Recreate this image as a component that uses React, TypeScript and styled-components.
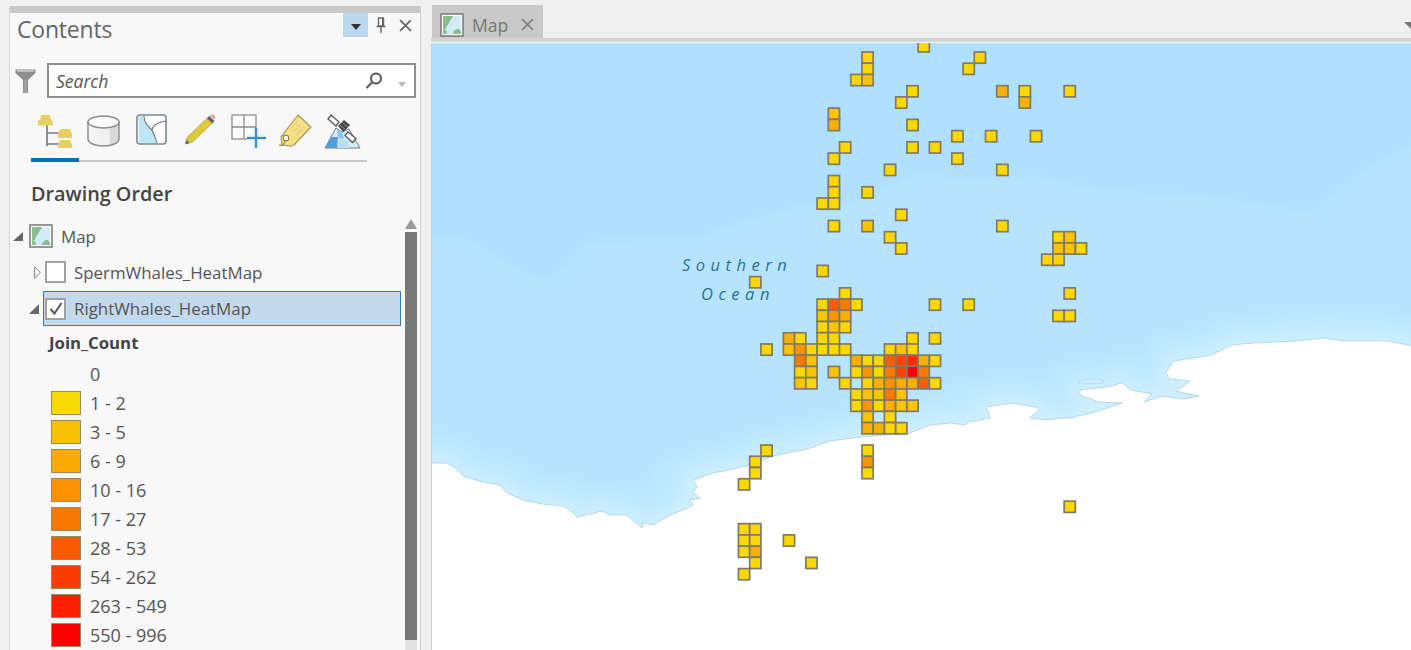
import React from 'react';
import styled, { createGlobalStyle } from 'styled-components';

const Global = createGlobalStyle`
  html, body { margin: 0; padding: 0; height: 650px; overflow: hidden; background: #f0f0f0; }
  #root { height: 650px; }
  * { box-sizing: border-box; }
`;

const Page = styled.div`
  display: flex;
  width: 1411px;
  height: 650px;
  overflow: hidden;
  font-family: "Open Sans", "Noto Sans", sans-serif;
  color: #555;
`;
const Panel = styled.aside`
  width: 412px;
  margin: 6px 0 0 9px;
  flex: none;
  display: flex;
  flex-direction: column;
  background: #f8f8f8;
  border-left: 1px solid #d8d8d8;
  border-right: 1px solid #d0d0d0;
  height: 644px;
`;
const TopBar = styled.div`
  height: 7px;
  background: #c9c9c9;
`;
const Header = styled.header`
  height: 32px;
  display: flex;
  align-items: flex-start;
  justify-content: space-between;
  padding: 0 2px 0 7px;
`;
const Title = styled.h1`
  margin: 0;
  font-size: 23px;
  line-height: 32px;
  font-weight: 400;
  color: #666;
  letter-spacing: -0.2px;
`;
const HeaderButtons = styled.div`
  display: flex;
  align-items: flex-start;
`;
const HeaderButton = styled.div<{ $active?: boolean }>`
  width: 25px;
  height: 24px;
  display: flex;
  align-items: center;
  justify-content: center;
  background: ${p => (p.$active ? '#bcd7ee' : 'transparent')};
`;
const SearchRow = styled.div`
  display: flex;
  align-items: center;
  margin-top: 18px;
  height: 35px;
  padding-left: 5px;
  gap: 11px;
`;
const SearchBox = styled.div`
  width: 369px;
  height: 35px;
  background: #fff;
  border: 2px solid #8e8e8e;
  display: flex;
  align-items: center;
  padding: 0 8px 0 7px;
`;
const SearchText = styled.span`
  flex: 1;
  font-size: 17.5px;
  font-style: italic;
  color: #555;
`;
const Tabs = styled.nav`
  margin: 16px 0 0 21px;
  width: 336px;
  height: 48px;
  border-bottom: 2px solid #c8c8c8;
  display: flex;
  align-items: flex-start;
  position: relative;
  padding-left: 7px;
`;
const ActiveMark = styled.div`
  position: absolute;
  left: 0;
  bottom: -2px;
  width: 48px;
  height: 4px;
  background: #0072bc;
`;
const TabIcon = styled.div<{ $w: number; $gap: number }>`
  width: ${p => p.$w}px;
  margin-right: ${p => p.$gap}px;
  height: 36px;
  flex: none;
`;
const Heading = styled.h2`
  margin: 18px 0 0 21px;
  height: 28px;
  font-size: 19.8px;
  line-height: 28px;
  font-weight: 600;
  color: #444;
`;
const TreeArea = styled.div`
  margin-top: 10px;
  flex: 1;
  display: flex;
  min-height: 0;
`;
const Tree = styled.div`
  flex: 1;
  min-width: 0;
`;
const Row = styled.div<{ $indent: number; $selected?: boolean }>`
  height: ${p => (p.$selected ? 35 : 36)}px;
  margin: ${p => (p.$selected ? '1px 0 0 33px' : '0')};
  width: ${p => (p.$selected ? '358px' : 'auto')};
  padding-left: ${p => p.$indent}px;
  display: flex;
  align-items: center;
  position: relative;
  background: ${p => (p.$selected ? '#c3daee' : 'transparent')};
  border: ${p => (p.$selected ? '1px solid #2a7fb8' : '0')};
`;
const Toggle = styled.span<{ $w: number }>`
  width: ${p => p.$w}px;
  flex: none;
  display: flex;
  align-items: center;
`;
const OuterToggle = styled.span`
  position: absolute;
  left: -15px;
  top: 12px;
  display: flex;
`;
const Check = styled.span`
  width: 21px;
  height: 22px;
  flex: none;
  border: 2px solid #a0a0a0;
  background: #fff;
  display: flex;
  align-items: center;
  justify-content: center;
  margin-right: 8px;
`;
const Label = styled.span`
  font-size: 16.9px;
  color: #555;
  white-space: nowrap;
`;
const MapLabelText = styled(Label)`
  margin-left: 8px;
`;
const GroupTitle = styled.div`
  height: 33px;
  padding-left: 39px;
  font-size: 16.8px;
  line-height: 33px;
  font-weight: 700;
  color: #444;
`;
const LegendRow = styled.div`
  height: 29px;
  padding-left: 41px;
  display: flex;
  align-items: center;
  gap: 9px;
`;
const LegendLabel = styled.span`
  font-size: 18px;
  color: #555;
  white-space: nowrap;
`;
const Swatch = styled.span<{ $color?: string }>`
  width: 30px;
  height: 24px;
  flex: none;
  background: ${p => p.$color ?? 'transparent'};
  border: ${p => (p.$color ? '1px solid #a08a60' : '0')};
`;
const ScrollBar = styled.div`
  width: 12px;
  margin-right: 3px;
  display: flex;
  flex-direction: column;
  background: transparent;
`;
const ScrollArrow = styled.div`
  height: 14px;
  display: flex;
  justify-content: center;
  align-items: flex-start;
  padding-top: 1px;
`;
const ScrollThumb = styled.div`
  height: 408px;
  background: #787878;
`;
const ScrollTrack = styled.div`
  flex: 1;
  background: #e2e2e2;
`;
const Main = styled.main`
  flex: 1;
  min-width: 0;
  margin-left: 10px;
  display: flex;
  flex-direction: column;
`;
const TabStrip = styled.div`
  height: 38px;
  padding-top: 5px;
  padding-left: 1px;
  display: flex;
  justify-content: space-between;
  align-items: flex-start;
`;
const MapTab = styled.div`
  width: 111px;
  height: 33px;
  background: #c9c9c9;
  display: flex;
  align-items: center;
  padding: 6px 0 0 8px;
`;
const MapTabLabel = styled.span`
  margin-left: 8px;
  font-size: 17.5px;
  color: #777;
  width: 49px;
`;
const OverflowArrow = styled.div`
  margin-top: 17px;
  width: 7px;
  height: 7px;
`;
const Rule = styled.div`
  height: 5px;
  background: #d3d3d3;
  border-bottom: 1px solid #fff;
`;
const MapFrame = styled.div`
  flex: 1;
  min-height: 0;
  border-left: 1px solid #d0d0d0;
`;
const MapSvg = styled.svg`
  display: block;
  width: 979px;
  height: 607px;
`;
const MapLabel = styled.text`
  font-family: "Open Sans", "Noto Sans", sans-serif;
  font-style: italic;
  font-size: 16.5px;
  letter-spacing: 5.5px;
  fill: #2c6f90;
`;

const TreeIcon = () => (
  <svg width="36" height="36" viewBox="0 0 36 36">
    <path d="M9 10v22M9 19h12M9 30h12" stroke="#777" strokeWidth="1.6" fill="none" />
    <path d="M3 1h9l1 6H2z" fill="#e8d060" />
    <path d="M0 6.5h15v5H0z" fill="#e8d060" />
    <path d="M22 15h10l2 5H20zM20 20h14v4H20z" fill="#e8d060" />
    <path d="M22 26h10l2 5H20zM20 31h14v3H20z" fill="#e8d060" />
  </svg>
);
const DbIcon = () => (
  <svg width="33" height="34" viewBox="0 0 33 34">
    <defs>
      <linearGradient id="db" x1="0" x2="1" y1="0" y2="0">
        <stop offset="0" stopColor="#f6f6f6" />
        <stop offset="0.7" stopColor="#eeeeee" />
        <stop offset="0.72" stopColor="#d9d9d9" />
        <stop offset="1" stopColor="#d9d9d9" />
      </linearGradient>
    </defs>
    <path d="M1 8v17c0 4 7 7 15.500 7S32 29 32 25V8z" fill="url(#db)" stroke="#8c8c8c" strokeWidth="1.4" />
    <ellipse cx="16.500" cy="8" rx="15.500" ry="6" fill="#fafafa" stroke="#8c8c8c" strokeWidth="1.400" />
  </svg>
);
const LayoutIcon = () => (
  <svg width="31" height="32" viewBox="0 0 31 32">
    <rect x="1" y="1" width="29" height="29" rx="3" fill="#fff" stroke="#7a878d" strokeWidth="1.600" />
    <path d="M3 2h5c0 6 3 9 7 13 3 3 4 9 6 14H4a1 1 0 0 1-1-1z" fill="#bde6f6" />
    <path d="M8 2c0 6 3 9 7 13 3 3 4 9 6 14M16 16c1-6 7-8 14-9" stroke="#6b787e" strokeWidth="1.100" fill="none" />
  </svg>
);
const PencilIcon = () => (
  <svg width="31" height="31" viewBox="0 0 31 31">
    <path d="M0.500 30l2-7L24 2.500l5 5L7.500 28z" fill="#e0c93c" stroke="#a89a3a" strokeWidth="0.700" />
    <path d="M0.500 30l1-4 3 3z" fill="#555" />
    <path d="M22 4.500l5 5 2.500-2.500-5-5z" fill="#666" />
    <path d="M25 1.500l3-1.200 2.500 2.500-1.200 3z" fill="#e8a0a0" />
  </svg>
);
const AddGridIcon = () => (
  <svg width="36" height="35" viewBox="0 0 36 35">
    <rect x="1" y="1" width="24" height="24" fill="#fbfbfb" stroke="#8c8c8c" strokeWidth="1.300" />
    <path d="M13 1v24M1 13h24" stroke="#8c8c8c" strokeWidth="1.300" />
    <path d="M25 14v20M16 24h19" stroke="#cfe6f3" strokeWidth="5" />
    <path d="M25 14v20M16 24h19" stroke="#3d88b4" strokeWidth="1.900" />
  </svg>
);
const TagIcon = () => (
  <svg width="35" height="34" viewBox="0 0 35 34">
    <path d="M21 1l13 12-17 18-3 1-9-1-1-8z" fill="#f6de85" stroke="#a2935a" strokeWidth="1.100" />
    <path d="M13 15l8-8M16 18l8-8M19 21l8-8" stroke="#d6c47e" strokeWidth="0.900" />
    <circle cx="9" cy="24" r="2.800" fill="#fff" stroke="#8c7f54" strokeWidth="1.100" />
    <path d="M8 27c-1 4-3 5-6 4" stroke="#8c7f54" strokeWidth="1.100" fill="none" />
  </svg>
);
const SatelliteIcon = () => (
  <svg width="37" height="35" viewBox="0 0 37 35">
    <path d="M1 34l11-20 6 4 7-3 11 19z" fill="#d4ecf8" stroke="#6f7f88" strokeWidth="1" />
    <path d="M1 34l6-11h7l-1 11z" fill="#4f9fdc" />
    <path d="M13 14l5 5 2 6-6-1z" fill="#8cc4ec" />
    <path d="M14 34l1-9 8 2 3 7z" fill="#b9dcf3" />
    <path d="M7 1l8 7-3 4-8-7z" fill="#fff" stroke="#555" strokeWidth="1.300" />
    <path d="M24 18l8 6.500-3.500 4-7.500-7z" fill="#fff" stroke="#555" strokeWidth="1.300" />
    <path d="M14 12l6-6 6 5-6.500 7z" fill="#444" />
    <path d="M16 11l5 4.500M18.500 8.500l5 4.500" stroke="#aaa" strokeWidth="0.800" />
  </svg>
);
const MiniMap = () => (
  <svg width="24" height="24" viewBox="0 0 24 24" style={{ flex: 'none' }}>
    <rect x="1" y="1" width="22" height="22" fill="#fff" stroke="#7d7d7d" strokeWidth="1.600" />
    <rect x="3" y="3" width="18" height="18" fill="#d2ecf7" />
    <path d="M3 3h10c-1 3-3 4-4 7-1 2-3 3-3 6l-3 1z" fill="#8dbc8c" />
    <path d="M3 17h3l1 4H3zM13 21c0-3 3-5 5-5s2 2 3 3v2z" fill="#8dbc8c" />
  </svg>
);
const FilterIcon = () => (
  <svg width="21" height="26" viewBox="0 0 21 26" style={{ flex: 'none' }}>
    <path d="M0.500 1.500h20v3.500L13 12v13H8V12L0.500 5z" fill="#8e8e8e" />
    <path d="M2 2h17v2H2z" fill="#bdbdbd" />
    <path d="M9.500 12h2v13h-2z" fill="#a8a8a8" />
  </svg>
);
const Close = ({ color, size }: { color: string; size: number }) => (
  <svg width={size} height={size} viewBox="0 0 12 12">
    <path d="M1 1l10 10M11 1L1 11" stroke={color} strokeWidth="1.500" />
  </svg>
);

type Level = 'y' | 'a' | 'b' | 'c' | 'd' | 'e' | 'f' | 'g' | 'h';
const FILL: Record<Level, string> = {
  y: '#fad800', a: '#fac400', b: '#fab000', c: '#fb9400', d: '#fb7a00', e: '#fb5e00', f: '#fb4400', g: '#fb2c00', h: '#f60000',
};
const CELLS: Record<number, string> = {
  [-1]: '5y',
  0: '0y 10y',
  1: '0y 9y',
  2: '-1y 0a',
  3: '4y 12b 14y 18y',
  4: '3y 14b',
  5: '-3a',
  6: '-3b 4y',
  7: '8y 11y 15y',
  8: '-2y 4y 6y',
  9: '-3y 8y',
  10: '2y 12y',
  11: '-3y',
  12: '-3y 0y',
  13: '-4y -3y',
  14: '3y',
  15: '-3y 0a 12y',
  16: '2y 17y 18a',
  17: '3y 17a 18a 19y',
  18: '16y 17y',
  19: '-4y',
  20: '-10y',
  21: '-2y 18y',
  22: '-4y -3e -2d -1y 6y 9y',
  23: '-4a -3c -2b 17y 18y',
  24: '-4y -3a -2y',
  25: '-7b -6y -4y -3y 4y 6y',
  26: '-9y -7a -6c -5y -4y -3y -2y 2y 3a 4y',
  27: '-6d -5a -1b 0y 1y 2e 3f 4g 5b 6y',
  28: '-6y -5a -3a -1y 0c 1y 2d 3f 4h 5d',
  29: '-6a -5y -2y 0y 1b 2c 3b 4b 5e 6y',
  30: '-1y 0a 1a 2d 3a',
  31: '-1y 0c 1y 2b 3a 4a',
  32: '0a 2y',
  33: '0b 1b 2y 3y',
  35: '-9y 0y',
  36: '-10y 0c',
  37: '-10y 0y',
  38: '-11y',
  40: '18y',
  42: '-11y -10y',
  43: '-11y -10y -7y',
  44: '-11y -10b',
  45: '-10y -5y',
  46: '-11y',
};
const PITCH = 11.23;
const cellList = Object.entries(CELLS).flatMap(([r, s]) =>
  s.split(' ').map(t => ({
    x: 867.6 + PITCH * parseInt(t, 10) - PITCH / 2,
    y: 57.6 + PITCH * Number(r) - PITCH / 2,
    fill: FILL[t[t.length - 1] as Level],
  })),
);

const LAND =
  'M420 463 L447 463 L455 468 L463 476 L483 482 L500 485 L507 493 L523 500 L543 504 L563 506 L570 510 L577 517 L590 514 L602 511 L610 515 L627 515 L635 522 L642 528 L643 523 L653 525 L667 517 L672 514 L683 510 L693 505 L690 500 L700 498 L693 492 L697 487 L693 480 L713 473 L747 466 L773 456 L807 449 L830 441 L860 437 L885 435 L907 434 L930 425 L951 423 L965 425 L969 422 L990 418 L986 407 L1011 403 L1036 407 L1039 410 L1030 418 L1048 420 L1062 418 L1073 418 L1078 416 L1092 413 L1122 403 L1099 402 L1080 395 L1080 390 L1106 387 L1122 383 L1131 390 L1152 394 L1144 402 L1162 396 L1183 399 L1199 396 L1176 391 L1190 381 L1169 379 L1166 372 L1174 361 L1211 355 L1232 345 L1253 343 L1296 341 L1324 338 L1345 341 L1387 341 L1425 348 L1425 670 L420 670 Z';

const LEGEND: { color?: string; label: string }[] = [
  { label: '0' },
  { color: '#f7da00', label: '1 - 2' },
  { color: '#f9c000', label: '3 - 5' },
  { color: '#faaa00', label: '6 - 9' },
  { color: '#fb9000', label: '10 - 16' },
  { color: '#fb7800', label: '17 - 27' },
  { color: '#fb5a00', label: '28 - 53' },
  { color: '#fb3c00', label: '54 - 262' },
  { color: '#fb2000', label: '263 - 549' },
  { color: '#fb0000', label: '550 - 996' },
];

export default function App() {
  return (
    <Page>
      <Global />
      <Panel>
        <TopBar />
        <Header>
          <Title>Contents</Title>
          <HeaderButtons>
            <HeaderButton $active>
              <svg width="12" height="7" viewBox="0 0 12 7" style={{ marginTop: 5 }}><path d="M1 0h10L6 6z" fill="#333" /></svg>
            </HeaderButton>
            <HeaderButton>
              <svg width="10" height="16" viewBox="0 0 10 16">
                <path d="M2.500 1h5v8h-5zM0.500 9.500h9M5 10v6" stroke="#666" strokeWidth="1.400" fill="none" />
                <path d="M6 1.500h1.500v7H6z" fill="#666" />
              </svg>
            </HeaderButton>
            <HeaderButton><Close color="#666" size={13} /></HeaderButton>
          </HeaderButtons>
        </Header>
        <SearchRow>
          <FilterIcon />
          <SearchBox>
            <SearchText>Search</SearchText>
            <svg width="18" height="18" viewBox="0 0 18 18">
              <circle cx="11" cy="6.500" r="5" fill="none" stroke="#555" strokeWidth="2" />
              <path d="M7.500 10L1.500 16" stroke="#666" strokeWidth="2.400" />
            </svg>
            <svg width="8" height="5" viewBox="0 0 8 5" style={{ margin: '8px 0 0 15px' }}><path d="M0 0h8L4 5z" fill="#bbb" /></svg>
          </SearchBox>
        </SearchRow>
        <Tabs>
          <ActiveMark />
          <TabIcon $w={36} $gap={13}><TreeIcon /></TabIcon>
          <TabIcon $w={33} $gap={16}><DbIcon /></TabIcon>
          <TabIcon $w={31} $gap={18}><LayoutIcon /></TabIcon>
          <TabIcon $w={31} $gap={15}><PencilIcon /></TabIcon>
          <TabIcon $w={36} $gap={10}><AddGridIcon /></TabIcon>
          <TabIcon $w={35} $gap={12}><TagIcon /></TabIcon>
          <TabIcon $w={37} $gap={0}><SatelliteIcon /></TabIcon>
        </Tabs>
        <Heading>Drawing Order</Heading>
        <TreeArea>
          <Tree>
            <Row $indent={3}>
              <Toggle $w={16}>
                <svg width="10" height="9" viewBox="0 0 10 9"><path d="M10 0v9H0z" fill="#666" /></svg>
              </Toggle>
              <MiniMap />
              <MapLabelText>Map</MapLabelText>
            </Row>
            <Row $indent={24}>
              <Toggle $w={11}>
                <svg width="7" height="13" viewBox="0 0 7 13"><path d="M0.700 0.700L6.200 6.500 0.700 12.300z" fill="none" stroke="#888" strokeWidth="1" /></svg>
              </Toggle>
              <Check />
              <Label>SpermWhales_HeatMap</Label>
            </Row>
            <Row $indent={1} $selected>
              <OuterToggle>
                <svg width="10" height="10" viewBox="0 0 10 10"><path d="M10 0v10H0z" fill="#666" /></svg>
              </OuterToggle>
              <Check>
                <svg width="14" height="13" viewBox="0 0 14 13"><path d="M1.500 7l4 4.500L12.500 1" stroke="#555" strokeWidth="2" fill="none" /></svg>
              </Check>
              <Label>RightWhales_HeatMap</Label>
            </Row>
            <GroupTitle>Join_Count</GroupTitle>
            {LEGEND.map(item => (
              <LegendRow key={item.label}>
                <Swatch $color={item.color} />
                <LegendLabel>{item.label}</LegendLabel>
              </LegendRow>
            ))}
          </Tree>
          <ScrollBar>
            <ScrollArrow>
              <svg width="12" height="10" viewBox="0 0 12 10"><path d="M6 0l6 10H0z" fill="#999" /></svg>
            </ScrollArrow>
            <ScrollThumb />
            <ScrollTrack />
          </ScrollBar>
        </TreeArea>
      </Panel>
      <Main>
        <TabStrip>
          <MapTab>
            <MiniMap />
            <MapTabLabel>Map</MapTabLabel>
            <Close color="#808080" size={13} />
          </MapTab>
          <OverflowArrow>
            <svg width="7" height="7" viewBox="0 0 7 7" style={{ display: 'block' }}><path d="M0 0h7v7z" fill="#777" /></svg>
          </OverflowArrow>
        </TabStrip>
        <Rule />
        <MapFrame>
          <MapSvg viewBox="432 43 979 607">
            <defs>
              <filter id="soft" x="-10%" y="-10%" width="120%" height="120%"><feGaussianBlur stdDeviation="7" /></filter>
              <filter id="soft2" x="-10%" y="-10%" width="120%" height="120%"><feGaussianBlur stdDeviation="4" /></filter>
            </defs>
            <rect x="432" y="43" width="979" height="607" fill="#b0e0ff" />
            <g filter="url(#soft2)">
              <path d="M400 237 L470 240 L505 262 L545 282 L575 255 L590 240 L640 240 L700 238 L730 225 L770 215 L800 206 L830 210 L880 190 L920 172 L960 180 L1040 176 L1100 190 L1200 195 L1310 212 L1360 172 L1440 130 L1440 520 L400 520 Z" fill="#b6e4ff" />
            </g>
            <g filter="url(#soft)">
              <path d={LAND} fill="#bee9ff" stroke="#bee9ff" strokeWidth="56" />
              <path d={LAND} fill="#cfefff" stroke="#cfefff" strokeWidth="16" />
            </g>
            <path d={LAND} fill="#fff" stroke="#b4d8ea" strokeWidth="1" />
            <path d="M1079 381c6-2 18-3 25-1l-1 3c-8 1-17 1-24 0z" fill="#cdeeff" stroke="#b4d8ea" strokeWidth="0.800" />
            <MapLabel x="682" y="271">Southern</MapLabel>
            <MapLabel x="701" y="300">Ocean</MapLabel>
            {cellList.map((c, i) => (
              <rect key={i} x={c.x} y={c.y} width={PITCH} height={PITCH} fill={c.fill} stroke="#807a66" strokeWidth="1.700" />
            ))}
          </MapSvg>
        </MapFrame>
      </Main>
    </Page>
  );
}
